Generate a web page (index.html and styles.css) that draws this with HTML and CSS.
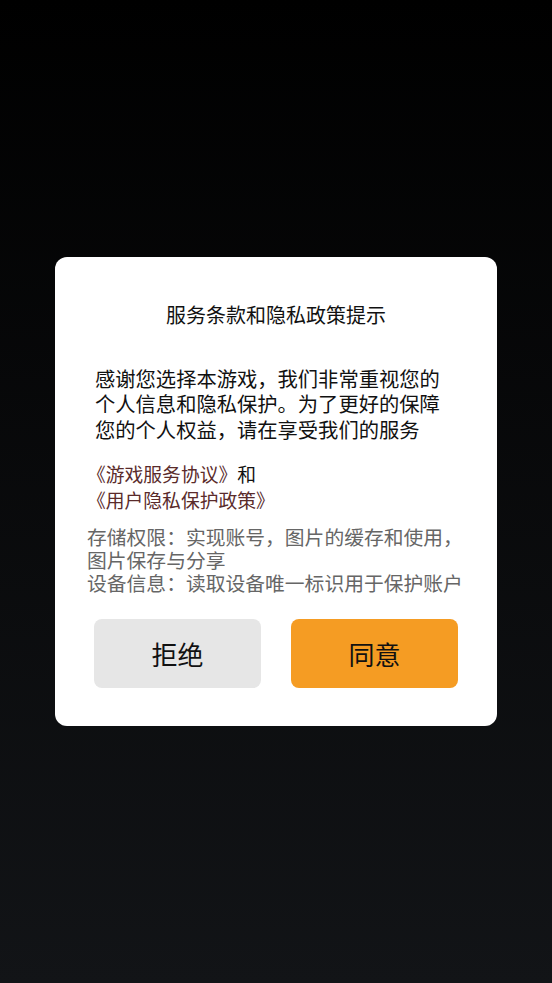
FILE: index.html
```html
<!DOCTYPE html>
<html lang="zh-CN">
<head>
  <meta charset="UTF-8">
  <meta name="viewport" content="width=device-width, initial-scale=1.0">
  <title>服务条款和隐私政策提示</title>
  <link rel="stylesheet" href="styles.css">
</head>
<body>
  <div class="dialog">
    <h2 class="dialog-title">服务条款和隐私政策提示</h2>
    <p class="dialog-intro">感谢您选择本游戏，我们非常重视您的个人信息和隐私保护。为了更好的保障您的个人权益，请在享受我们的服务</p>
    <p class="dialog-links">
      <a class="link">《游戏服务协议》</a>和<br>
      <a class="link">《用户隐私保护政策》</a>
    </p>
    <!-- 权限说明 -->
    <p class="dialog-perm">存储权限：实现账号，图片的缓存和使用，图片保存与分享<br>设备信息：读取设备唯一标识用于保护账户</p>
    <div class="dialog-actions">
      <button class="btn btn-reject">拒绝</button>
      <button class="btn btn-agree">同意</button>
    </div>
  </div>
</body>
</html>
```

FILE: styles.css
```css
body {
  font-family: "Noto Sans CJK SC", "Noto Sans", sans-serif;
  background: linear-gradient(#000000, #121417);
  margin: 0;
  padding: 0;
  min-height: 100vh;
  display: flex;
  align-items: center;
  justify-content: center;
}

.dialog {
  width: 442px;
  background: #fff;
  border-radius: 12px;
  padding: 46px 0 38px;
  box-sizing: border-box;
}

.dialog-title {
  margin: 0;
  font-size: 20px;
  line-height: 24px;
  font-weight: normal;
  color: #111;
  text-align: center;
}

.dialog-intro {
  margin: 39px 40px 0;
  font-size: 20.3px;
  line-height: 25.5px;
  color: #111;
}

.dialog-links {
  margin: 19px 32px 0;
  font-size: 18.8px;
  line-height: 26px;
  color: #111;
}

.dialog-links .link {
  color: #5a2b2b;
  text-decoration: none;
}

.dialog-perm {
  margin: 12px 30px 0 32px;
  font-size: 19.8px;
  line-height: 23px;
  color: #666;
}

.dialog-actions {
  display: flex;
  gap: 30px;
  margin: 25px 39px 0;
}

.btn {
  flex: 1;
  height: 69px;
  border: none;
  border-radius: 8px;
  font-family: inherit;
  font-size: 26px;
  color: #111;
  cursor: pointer;
}

.btn-reject {
  background: #e6e6e6;
}

.btn-agree {
  background: #f59c23;
}
```
